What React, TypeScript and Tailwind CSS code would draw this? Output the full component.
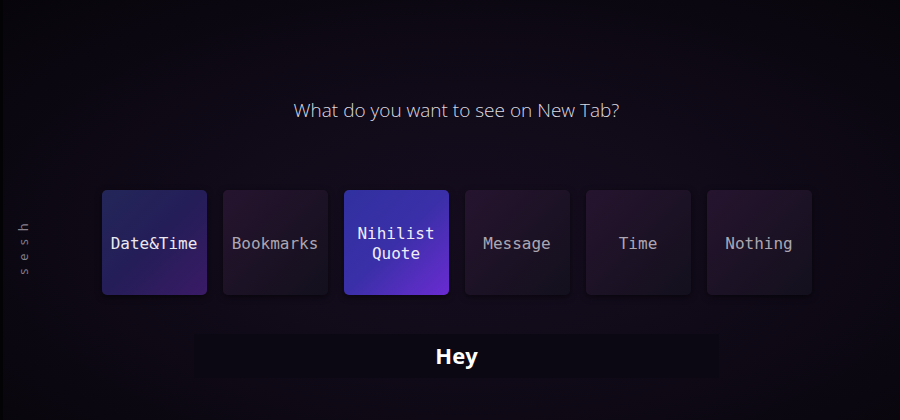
const options = [
  { label: "Date&Time", selected: true, tone: "dim" },
  { label: "Bookmarks", selected: false },
  { label: "Nihilist Quote", selected: true, tone: "bright" },
  { label: "Message", selected: false },
  { label: "Time", selected: false },
  { label: "Nothing", selected: false },
];

function OptionCard({ label, selected, tone }: { label: string; selected: boolean; tone?: string }) {
  let cls = "bg-gradient-to-br from-[#26142f] to-[#13101d] text-[#aca6b2]";
  if (selected && tone === "dim") cls = "bg-gradient-to-br from-[#232659] via-[#241d58] to-[#3a1a66] text-[#ebe8f0]";
  if (selected && tone === "bright") cls = "bg-gradient-to-br from-[#3131a0] via-[#3a2fa8] to-[#6a2ad2] text-[#f0edf7]";
  return (
    <div
      className={`flex h-[105px] w-[105px] items-center justify-center rounded-[5px] px-2 pt-[3px] text-center text-[16px] leading-[20px] shadow-[0_2px_6px_rgba(0,0,0,0.5)] ${cls}`}
      style={{ fontFamily: '"DejaVu Sans Mono", "Liberation Mono", monospace' }}
    >
      <span className="w-[90px]">{label}</span>
    </div>
  );
}

export default function App() {
  return (
    <div className="relative flex h-[420px] w-[900px] overflow-hidden bg-[radial-gradient(ellipse_at_52%_55%,#150d1f_0%,#100a18_45%,#07050b_100%)]">
      <div className="w-[3px] bg-[#030205]" />
      <div className="flex w-[40px] justify-center pt-[236px]">
        <span
          className="h-[18px] -rotate-90 whitespace-nowrap text-[13px] tracking-[8px] text-[#85808c]"
          style={{ fontFamily: '"Open Sans", sans-serif' }}
        >
          sesh
        </span>
      </div>
      <div className="flex flex-1 flex-col items-center pr-[30px]" style={{ fontFamily: '"Open Sans", sans-serif' }}>
        <h1 className="mt-[96px] text-[19px] font-light text-[#dcdae0]">What do you want to see on New Tab?</h1>
        <div className="mt-[65px] flex gap-[16px]">
          {options.map((o) => (
            <OptionCard key={o.label} {...o} />
          ))}
        </div>
        <div className="mt-[39px] flex h-[44px] w-[525px] items-center justify-center bg-[#0c0813]">
          <span className="text-[22px] font-bold text-white">Hey</span>
        </div>
      </div>
    </div>
  );
}
